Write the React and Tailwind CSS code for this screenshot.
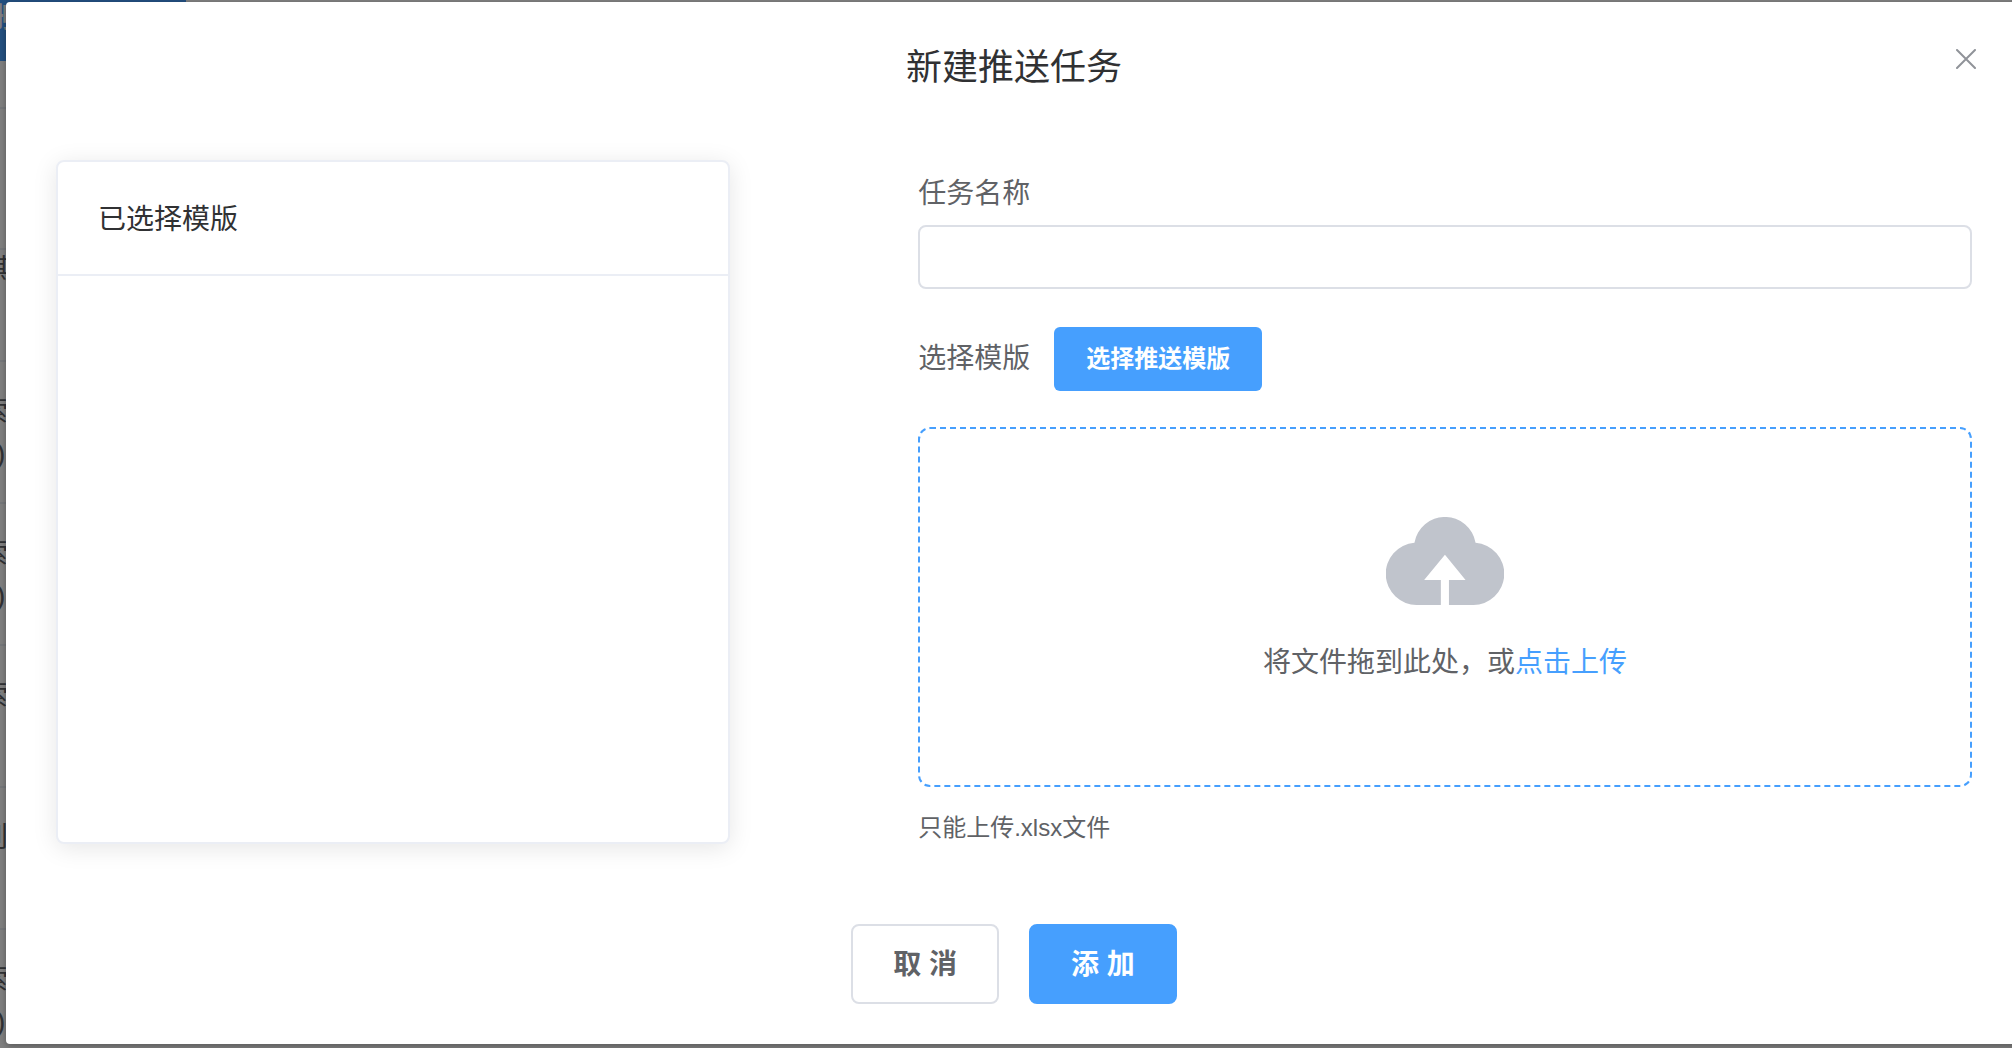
import { useState } from "react";

const rows = [
  { text: "索", extra: ")" },
  { text: "索", extra: ")" },
  { text: "索", extra: "" },
  { text: "到", extra: "" },
  { text: "索", extra: ")" },
];

function CloudIcon() {
  return (
    <svg width="118" height="88" viewBox="0 0 117.7 88" aria-hidden="true">
      <path
        fill="#c0c4cc"
        fillRule="evenodd"
        d="M31.2 88A31.2 31.2 0 0 1 28.3 25.7A31 31 0 0 1 89.4 25.7A31.2 31.2 0 0 1 86.5 88H62.8V63H79.4L58.8 37.7L38 63H54.7V88Z"
      />
    </svg>
  );
}

function CloseIcon() {
  return (
    <svg width="20" height="20" viewBox="0 0 20 20" aria-hidden="true">
      <path d="M1 1L19 19M19 1L1 19" stroke="#909399" strokeWidth="2" strokeLinecap="round" />
    </svg>
  );
}

function PageBehind() {
  return (
    <div aria-hidden="true" className="absolute inset-0 overflow-hidden bg-white text-[28px] leading-9 text-[#606266]">
      <div className="h-[61px] w-[186px] overflow-hidden bg-[#469ffe] font-bold text-white">
        <span className="-ml-4 block">删除</span>
      </div>
      <div className="h-12 border-b-2 border-[#ebeef5]" />
      <div className="h-[141px] border-b-2 border-[#ebeef5]" />
      <div className="h-[112px] border-b-2 border-[#ebeef5] pt-0.5">
        <span className="-ml-2 block">期</span>
      </div>
      {rows.map((row, i) => (
        <div key={i} className="h-[142px] border-b-2 border-[#ebeef5] pt-8">
          <span className="-ml-5 block">{row.text}</span>
          <span className="-ml-1 block pt-1.5">{row.extra}</span>
        </div>
      ))}
      <div className="absolute inset-0 bg-black/50" />
    </div>
  );
}

function TemplateCard() {
  return (
    <section className="flex-1 rounded-lg border-2 border-[#ebeef5] bg-white shadow-[0_4px_24px_rgba(0,0,0,0.1)]">
      <h2 className="border-b-2 border-[#ebeef5] px-10 pt-[38px] pb-[34px] text-[28px] leading-10 text-[#303133]">
        已选择模版
      </h2>
    </section>
  );
}

export default function App() {
  const [name, setName] = useState("");

  return (
    <div className="relative min-h-screen overflow-hidden pt-0.5 pb-1 pl-1.5 font-['Liberation_Sans','Noto_Sans_CJK_SC',sans-serif]">
      <PageBehind />

      <div
        role="dialog"
        aria-labelledby="dialog-title"
        className="relative -mr-2.5 rounded-sm bg-white px-[50px] py-10 shadow-[0_2px_6px_rgba(0,0,0,0.3)]"
      >
        <h1 id="dialog-title" className="pt-0.5 text-center text-4xl leading-12 text-[#303133]">
          新建推送任务
        </h1>
        <button
          type="button"
          aria-label="关闭"
          className="absolute top-[41px] right-10 flex size-8 items-center justify-center"
        >
          <CloseIcon />
        </button>

        <div className="mt-[68px] flex gap-[188px]">
          <TemplateCard />

          <form className="w-[55%] text-[28px] text-[#606266]">
            <label htmlFor="task-name" className="block pt-0.5 leading-[63px]">
              任务名称
            </label>
            <input
              id="task-name"
              type="text"
              value={name}
              onChange={(e) => setName(e.target.value)}
              className="block h-16 w-full rounded-lg border-2 border-[#dcdfe6] bg-white px-7 outline-none"
            />

            <div className="mt-[38px] flex items-center gap-6">
              <label htmlFor="pick-template">选择模版</label>
              <button
                id="pick-template"
                type="button"
                className="h-16 rounded-md bg-[#469ffe] px-8 text-2xl font-bold text-white"
              >
                选择推送模版
              </button>
            </div>

            <div className="mt-9 flex h-[360px] flex-col items-center rounded-xl border-2 border-dashed border-[#469ffe] pt-[88px]">
              <CloudIcon />
              <p className="mt-[38px] leading-10">
                将文件拖到此处，或
                <a href="#upload" className="text-[#469ffe]">点击上传</a>
              </p>
            </div>
            <p className="mt-[25px] text-2xl leading-8">只能上传.xlsx文件</p>
          </form>
        </div>

        <div className="mt-20 flex justify-center gap-[30px] text-[28px] font-bold">
          <button type="button" className="h-20 rounded-lg border-2 border-[#dcdfe6] bg-white px-10 pt-0.5 text-[#606266]">
            取 消
          </button>
          <button type="button" className="h-20 rounded-lg border-2 border-[#469ffe] bg-[#469ffe] px-10 pt-0.5 text-white">
            添 加
          </button>
        </div>
      </div>
    </div>
  );
}
